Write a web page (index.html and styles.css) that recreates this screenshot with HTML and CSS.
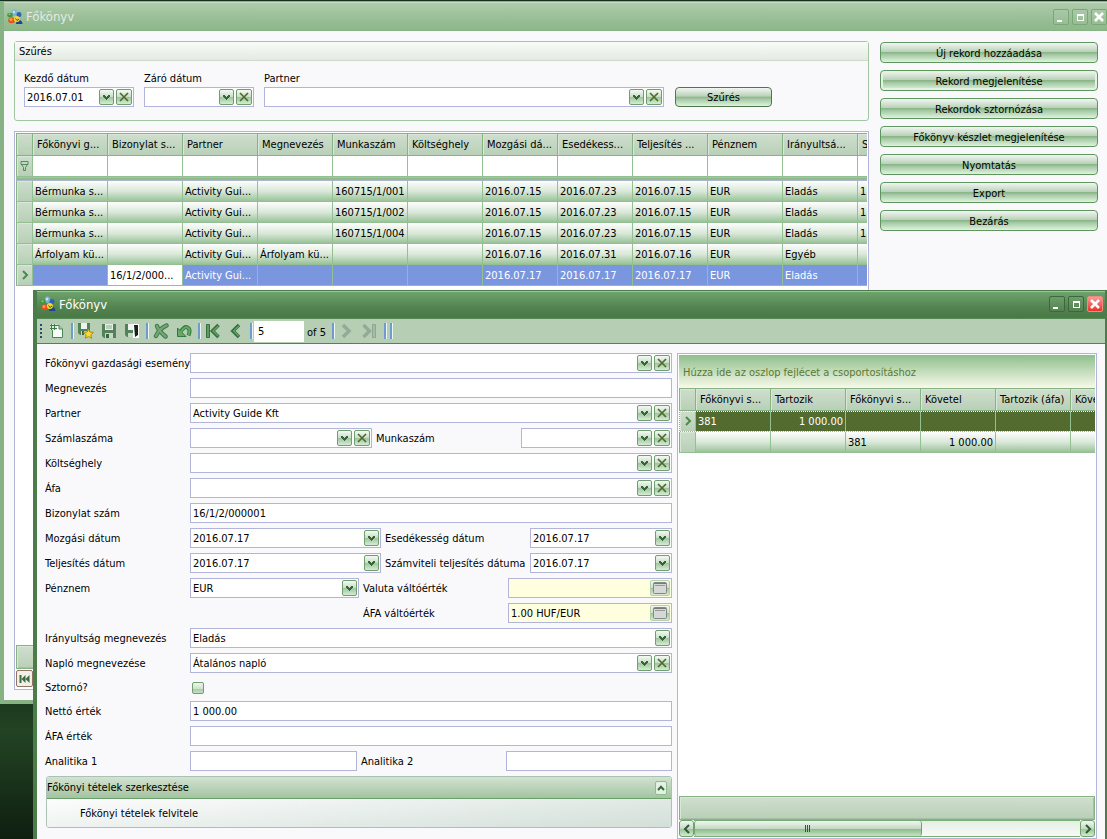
FILE: index.html
```
<!DOCTYPE html>
<html lang="hu">
<head>
<meta charset="utf-8">
<title>Főkönyv</title>
<link rel="stylesheet" href="styles.css">
</head>
<body>
<svg class="sprite" aria-hidden="true">
  <symbol id="logo" viewBox="0 0 16 16">
    <ellipse cx="7.500" cy="3.800" rx="2.600" ry="3.300" fill="#7db2d8"/><ellipse cx="7" cy="3" rx="1.200" ry="1.600" fill="#c4e2f2"/>
    <ellipse cx="12" cy="5.500" rx="2.400" ry="2.600" fill="#2c62b8"/>
    <ellipse cx="3" cy="6" rx="2.800" ry="2.300" fill="#3d9a3c"/><circle cx="2.500" cy="5.300" r="1" fill="#82cf6c"/>
    <path d="M9 15q0-4 3-4t3.500 4z" fill="#1c4598"/>
    <ellipse cx="4.600" cy="11.300" rx="3.400" ry="3" fill="#e8501c"/><circle cx="4" cy="10.500" r="1.500" fill="#ff9a50"/>
    <circle cx="9.800" cy="10" r="3" fill="#f5d535"/>
    <path d="M8.500 9.500l1.500 2 2-1.500" stroke="#5c4a18" fill="none"/>
  </symbol>
  <symbol id="down" viewBox="0 0 15 16"><path d="M4 6h2v1h1v1h1V7h1V6h2v2h-1v1H9v1H8v1H7v-1H6V9H5V8H4z" fill="#38643a"/></symbol>
  <symbol id="cross" viewBox="0 0 16 16"><path d="M4 4l8 8M12 4l-8 8" stroke="#4f6b2c" stroke-width="1.7" fill="none"/></symbol>
  <symbol id="up" viewBox="0 0 12 14"><path d="M3 9l3-3.200L9 9" stroke="#356b38" stroke-width="2" fill="none"/></symbol>
  <symbol id="caret" viewBox="0 0 10 10"><path d="M3 1l4 4-4 4" stroke="#4c8a50" stroke-width="2" fill="none"/></symbol>
  <symbol id="min" viewBox="0 0 16 16"><path d="M4 11h5v2H4z" fill="#fff"/></symbol>
  <symbol id="max" viewBox="0 0 16 16"><path d="M5 5h7v7H5zM6 7v4h5V7z" fill="#fff" fill-rule="evenodd"/></symbol>
  <symbol id="close" viewBox="0 0 16 16"><path d="M4 4l8 8M12 4l-8 8" stroke="#fff" stroke-width="2.600"/></symbol>
  <symbol id="card" viewBox="0 0 20 16"><rect x="3.500" y="2.500" width="13" height="11" rx="1" fill="#d6d8d6" stroke="#858985"/><path d="M4 3.500h12" stroke="#777c77"/><path d="M5 5.500h10" stroke="#999"/></symbol>
  <symbol id="new" viewBox="0 0 16 16"><path d="M4 3h7l3 3v9H4z" fill="#f8fcf8"/><path d="M3.500 7v7.500h10V6l-3.500-3.500H8" fill="none" stroke="#4d8552"/><path d="M10 2.500V6h3.500" fill="#a9c8a9" stroke="#4d8552"/><path d="M1 1h7v6H1z" fill="#dcebdc"/><path d="M1 2.500h7M1 5.500h7M2.500 1v6M5.500 1v6" stroke="#3d7a43"/></symbol>
  <symbol id="disk" viewBox="0 0 16 16"><path d="M1 1h14v14H3l-2-2z" fill="#53825a"/><path d="M4 1h8v6H4z" fill="#e7efe7"/><path d="M5 3h6M5 5h6" stroke="#8ba98d"/><path d="M4 10h8v5H4z" fill="#c8d6c8"/><path d="M5 11h3v4H5z" fill="#3c6541"/></symbol>
  <symbol id="disk-star" viewBox="0 0 18 18"><path d="M1 1h12v12H3l-2-2z" fill="#53825a"/><path d="M4 1h6v6H4z" fill="#eef3ee"/><path d="M4 9h6v4H4z" fill="#c8d6c8"/><path d="M5 9h2v4H5z" fill="#3c6541"/><path d="M11.500 7l1.400 3 3.600.4-2.600 2.400.7 3.500-3.100-1.800-3.100 1.800.7-3.500-2.600-2.400 3.600-.4z" fill="#f9dc2c" stroke="#b18a13"/></symbol>
  <symbol id="disk-exit" viewBox="0 0 16 16"><path d="M1 1h12v13H3l-2-2z" fill="#53825a"/><path d="M4 1h6v6H4z" fill="#eef3ee"/><path d="M4 10h6v4H4z" fill="#c8d6c8"/><path d="M9 1h6v14H9z" fill="#fff"/><path d="M10 2h4v10l-3 2z" fill="#17231a"/></symbol>
  <symbol id="delete" viewBox="0 0 16 16"><path d="M4 3q1 4 8.500 10.500M13.500 2.500Q6 6 3 13" stroke="#3f7a49" stroke-width="4.400" stroke-linecap="round" fill="none"/><path d="M4 3q1 4 8.500 10.500M13.500 2.500Q6 6 3 13" stroke="#74a67a" stroke-width="2.400" stroke-linecap="round" fill="none"/></symbol>
  <symbol id="undo" viewBox="0 0 16 16"><path d="M3.500 10.500Q8 2.500 11.500 4.500t1 8" stroke="#2f7b3e" stroke-width="4" fill="none"/><path d="M1.500 5v8.500H10z" fill="#69a868" stroke="#2f7b3e"/><path d="M4 10.500Q8 2.800 11.500 4.500t1 7.500" stroke="#69a868" stroke-width="2" fill="none"/></symbol>
  <symbol id="first" viewBox="0 0 16 16"><path d="M1.500 1.500h3v13h-3z" fill="#5d9a66" stroke="#35703e"/><path d="M13.500 2L7.500 8l6 6" stroke="#35703e" stroke-width="3.600" fill="none"/><path d="M13.200 3L8 8l5.200 5" stroke="#68a46f" stroke-width="1.200" fill="none"/></symbol>
  <symbol id="prev" viewBox="0 0 16 16"><path d="M11 2L5 8l6 6" stroke="#35703e" stroke-width="3.600" fill="none"/><path d="M10.800 3L5.600 8l5.200 5" stroke="#68a46f" stroke-width="1.200" fill="none"/></symbol>
  <symbol id="next" viewBox="0 0 16 16"><path d="M5 2l6 6-6 6" stroke="#94a996" stroke-width="3.400" fill="none"/></symbol>
  <symbol id="last" viewBox="0 0 16 16"><path d="M2.500 2l6 6-6 6" stroke="#94a996" stroke-width="3.400" fill="none"/><path d="M11.500 1.500h3v13h-3z" fill="#a9baa9" stroke="#90a592"/></symbol>
</svg>

<div class="desktop">
  <section class="window main-window">
    <header class="titlebar">
      <svg class="i16"><use href="#logo"/></svg>
      <h1>Főkönyv</h1>
      <div class="winbtns">
        <button class="winbtn" aria-label="Kis méret"><svg><use href="#min"/></svg></button>
        <button class="winbtn" aria-label="Teljes méret"><svg><use href="#max"/></svg></button>
        <button class="winbtn" aria-label="Ablak bezárása"><svg><use href="#close"/></svg></button>
      </div>
    </header>
    <div class="main-body">
      <div class="main-left">
        <form class="filter">
          <h2>Szűrés</h2>
          <div class="filter-fields">
            <label for="kezdo">Kezdő dátum</label>
            <label for="zaro">Záró dátum</label>
            <label for="fpartner">Partner</label>
            <span></span>
            <div class="field"><input id="kezdo" value="2016.07.01"><button type="button" class="mini drop" aria-label="Lenyitás"><svg><use href="#down"/></svg></button><button type="button" class="mini clear" aria-label="Törlés"><svg><use href="#cross"/></svg></button></div>
            <div class="field"><input id="zaro"><button type="button" class="mini drop" aria-label="Lenyitás"><svg><use href="#down"/></svg></button><button type="button" class="mini clear" aria-label="Törlés"><svg><use href="#cross"/></svg></button></div>
            <div class="field"><select id="fpartner"><option></option></select><span class="mini drop"><svg><use href="#down"/></svg></span><button type="button" class="mini clear" aria-label="Törlés"><svg><use href="#cross"/></svg></button></div>
            <button type="button" class="push">Szűrés</button>
          </div>
        </form>
        <div class="gridbox main-grid">
          <div class="scroller">
          <table class="grid ledger">
            <colgroup><col class="c-ind"><col span="12"></colgroup>
            <thead>
              <tr><th></th><th>Főkönyvi g...</th><th>Bizonylat s...</th><th>Partner</th><th>Megnevezés</th><th>Munkaszám</th><th>Költséghely</th><th>Mozgási dá...</th><th>Esedékess...</th><th>Teljesítés ...</th><th>Pénznem</th><th>Irányultsá...</th><th>S</th></tr>
              <tr class="filter-row"><td class="ind"><svg class="funnel" viewBox="0 0 9 10"><path d="M1 .5h7v3H1zM1.500 3.500l2 3v3h2v-3l2-3" fill="none" stroke="#4f8d55"/></svg></td><td></td><td></td><td></td><td></td><td></td><td></td><td></td><td></td><td></td><td></td><td></td><td></td></tr>
              <tr class="split"><td colspan="13"></td></tr>
            </thead>
            <tbody>
              <tr><td class="ind"></td><td>Bérmunka s...</td><td></td><td>Activity Gui...</td><td></td><td>160715/1/001</td><td></td><td>2016.07.15</td><td>2016.07.23</td><td>2016.07.15</td><td>EUR</td><td>Eladás</td><td>1</td></tr>
              <tr><td class="ind"></td><td>Bérmunka s...</td><td></td><td>Activity Gui...</td><td></td><td>160715/1/002</td><td></td><td>2016.07.15</td><td>2016.07.23</td><td>2016.07.15</td><td>EUR</td><td>Eladás</td><td>1</td></tr>
              <tr><td class="ind"></td><td>Bérmunka s...</td><td></td><td>Activity Gui...</td><td></td><td>160715/1/004</td><td></td><td>2016.07.15</td><td>2016.07.23</td><td>2016.07.15</td><td>EUR</td><td>Eladás</td><td>1</td></tr>
              <tr><td class="ind"></td><td>Árfolyam kü...</td><td></td><td>Activity Gui...</td><td>Árfolyam kü...</td><td></td><td></td><td>2016.07.16</td><td>2016.07.31</td><td>2016.07.16</td><td>EUR</td><td>Egyéb</td><td></td></tr>
              <tr class="selected"><td class="ind"><svg class="caret"><use href="#caret"/></svg></td><td></td><td class="focus">16/1/2/000...</td><td>Activity Gui...</td><td></td><td></td><td></td><td>2016.07.17</td><td>2016.07.17</td><td>2016.07.17</td><td>EUR</td><td>Eladás</td><td></td></tr>
            </tbody>
          </table>
          </div>
          <div class="summary"></div>
          <div class="navigator"><button class="navbtn" aria-label="Első rekord"><svg viewBox="0 0 10 10"><path d="M0 1h2v8H0zM6 1v8L2 5zM10 1v8L6 5z" fill="#3f6b40"/></svg></button></div>
        </div>
      </div>
      <nav class="actions">
        <button class="push">Új rekord hozzáadása</button>
        <button class="push active">Rekord megjelenítése</button>
        <button class="push">Rekordok sztornózása</button>
        <button class="push">Főkönyv készlet megjelenítése</button>
        <button class="push">Nyomtatás</button>
        <button class="push">Export</button>
        <button class="push">Bezárás</button>
      </nav>
    </div>
  </section>

  <section class="window detail-window">
    <header class="titlebar">
      <svg class="i16"><use href="#logo"/></svg>
      <h1>Főkönyv</h1>
      <div class="winbtns">
        <button class="winbtn" aria-label="Kis méret"><svg><use href="#min"/></svg></button>
        <button class="winbtn" aria-label="Teljes méret"><svg><use href="#max"/></svg></button>
        <button class="winbtn red" aria-label="Ablak bezárása"><svg><use href="#close"/></svg></button>
      </div>
    </header>
    <div class="toolbar">
      <span class="grip"></span>
      <button aria-label="Új"><svg><use href="#new"/></svg></button>
      <i></i>
      <button aria-label="Mentés és új"><svg class="big"><use href="#disk-star"/></svg></button>
      <button aria-label="Mentés"><svg><use href="#disk"/></svg></button>
      <button aria-label="Mentés és bezárás"><svg><use href="#disk-exit"/></svg></button>
      <i></i>
      <button aria-label="Törlés"><svg><use href="#delete"/></svg></button>
      <button aria-label="Visszavonás"><svg><use href="#undo"/></svg></button>
      <i></i>
      <button aria-label="Első"><svg><use href="#first"/></svg></button>
      <button aria-label="Előző"><svg><use href="#prev"/></svg></button>
      <i></i>
      <input id="pos" value="5" aria-label="Pozíció">
      <label for="pos">of 5</label>
      <i></i>
      <button aria-label="Következő" disabled><svg><use href="#next"/></svg></button>
      <button aria-label="Utolsó" disabled><svg><use href="#last"/></svg></button>
      <i></i><i></i>
    </div>
    <div class="detail-body">
      <form class="detail-form">
        <div class="row"><label for="f1">Főkönyvi gazdasági esemény</label><div class="field"><select id="f1"><option></option></select><span class="mini drop"><svg><use href="#down"/></svg></span><button type="button" class="mini clear" aria-label="Törlés"><svg><use href="#cross"/></svg></button></div></div>
        <div class="row"><label for="f2">Megnevezés</label><div class="field"><input id="f2"></div></div>
        <div class="row"><label for="f3">Partner</label><div class="field"><select id="f3"><option>Activity Guide Kft</option></select><span class="mini drop"><svg><use href="#down"/></svg></span><button type="button" class="mini clear" aria-label="Törlés"><svg><use href="#cross"/></svg></button></div></div>
        <div class="row r-invoice"><label for="f4">Számlaszáma</label><div class="field"><select id="f4"><option></option></select><span class="mini drop"><svg><use href="#down"/></svg></span><button type="button" class="mini clear" aria-label="Törlés"><svg><use href="#cross"/></svg></button></div>
          <label for="f5">Munkaszám</label><div class="field"><select id="f5"><option></option></select><span class="mini drop"><svg><use href="#down"/></svg></span><button type="button" class="mini clear" aria-label="Törlés"><svg><use href="#cross"/></svg></button></div></div>
        <div class="row"><label for="f6">Költséghely</label><div class="field"><select id="f6"><option></option></select><span class="mini drop"><svg><use href="#down"/></svg></span><button type="button" class="mini clear" aria-label="Törlés"><svg><use href="#cross"/></svg></button></div></div>
        <div class="row"><label for="f7">Áfa</label><div class="field"><select id="f7"><option></option></select><span class="mini drop"><svg><use href="#down"/></svg></span><button type="button" class="mini clear" aria-label="Törlés"><svg><use href="#cross"/></svg></button></div></div>
        <div class="row"><label for="f8">Bizonylat szám</label><div class="field"><input id="f8" value="16/1/2/000001"></div></div>
        <div class="row r-date"><label for="f9">Mozgási dátum</label><div class="field"><input id="f9" value="2016.07.17"><button type="button" class="mini drop" aria-label="Lenyitás"><svg><use href="#down"/></svg></button></div>
          <label for="f10">Esedékesség dátum</label><div class="field"><input id="f10" value="2016.07.17"><button type="button" class="mini drop" aria-label="Lenyitás"><svg><use href="#down"/></svg></button></div></div>
        <div class="row r-date"><label for="f11">Teljesítés dátum</label><div class="field"><input id="f11" value="2016.07.17"><button type="button" class="mini drop" aria-label="Lenyitás"><svg><use href="#down"/></svg></button></div>
          <label for="f12">Számviteli teljesítés dátuma</label><div class="field"><input id="f12" value="2016.07.17"><button type="button" class="mini drop" aria-label="Lenyitás"><svg><use href="#down"/></svg></button></div></div>
        <div class="row r-currency"><label for="f13">Pénznem</label><div class="field"><select id="f13"><option>EUR</option></select><span class="mini drop"><svg><use href="#down"/></svg></span></div>
          <label for="f14">Valuta váltóérték</label><div class="field yellow"><input id="f14"><button type="button" class="mini card" aria-label="Megnyitás"><svg><use href="#card"/></svg></button></div></div>
        <div class="row r-currency"><span></span><span></span><label for="f15">ÁFA váltóérték</label><div class="field yellow"><input id="f15" value="1.00 HUF/EUR"><button type="button" class="mini card" aria-label="Megnyitás"><svg><use href="#card"/></svg></button></div></div>
        <div class="row"><label for="f16">Irányultság megnevezés</label><div class="field"><select id="f16"><option>Eladás</option></select><span class="mini drop"><svg><use href="#down"/></svg></span></div></div>
        <div class="row"><label for="f17">Napló megnevezése</label><div class="field"><select id="f17"><option>Átalános napló</option></select><span class="mini drop"><svg><use href="#down"/></svg></span><button type="button" class="mini clear" aria-label="Törlés"><svg><use href="#cross"/></svg></button></div></div>
        <div class="row r-check"><label for="f18">Sztornó?</label><input type="checkbox" id="f18"></div>
        <div class="row"><label for="f19">Nettó érték</label><div class="field"><input id="f19" value="1 000.00"></div></div>
        <div class="row"><label for="f20">ÁFA érték</label><div class="field"><input id="f20"></div></div>
        <div class="row r-analytic"><label for="f21">Analitika 1</label><div class="field"><input id="f21"></div><label for="f22">Analitika 2</label><div class="field"><input id="f22"></div></div>
        <div class="navgroup">
          <div class="navgroup-head"><h2>Főkönyi tételek szerkesztése</h2><button type="button" aria-label="Összecsukás"><svg><use href="#up"/></svg></button></div>
          <a href="#">Főkönyi tételek felvitele</a>
        </div>
      </form>
      <div class="gridbox items">
        <div class="grouppanel">Húzza ide az oszlop fejlécet a csoportosításhoz</div>
        <div class="scroller">
        <table class="grid">
          <colgroup><col class="c-ind"><col span="6"></colgroup>
          <thead><tr><th></th><th>Főkönyvi s...</th><th>Tartozik</th><th>Főkönyvi s...</th><th>Követel</th><th>Tartozik (áfa)</th><th>Köve</th></tr></thead>
          <tbody>
            <tr class="olive"><td class="ind"><svg class="caret"><use href="#caret"/></svg></td><td>381</td><td class="num">1 000.00</td><td></td><td></td><td></td><td></td></tr>
            <tr><td class="ind"></td><td></td><td></td><td>381</td><td class="num">1 000.00</td><td></td><td></td></tr>
          </tbody>
        </table>
        </div>
        <div class="summary"></div>
        <div class="hscroll">
          <button aria-label="Balra"><svg viewBox="0 0 10 10"><path d="M7 1L3 5l4 4" stroke="#2f5a33" stroke-width="2" fill="none"/></svg></button>
          <div class="track"><div class="thumb"><span></span></div></div>
          <button aria-label="Jobbra"><svg viewBox="0 0 10 10"><path d="M3 1l4 4-4 4" stroke="#2f5a33" stroke-width="2" fill="none"/></svg></button>
        </div>
      </div>
    </div>
  </section>
</div>
</body>
</html>
```

FILE: styles.css
```
* { box-sizing: border-box; }
body, h1, h2 { margin: 0; }
body, button, input, select {
  font-family: "DejaVu Sans Condensed", "Noto Sans", sans-serif;
  font-size: 11px;
  color: #000;
}
button { padding: 0; }
svg { display: block; }
.sprite { position: absolute; width: 0; height: 0; }

.desktop {
  position: relative;
  height: 100vh;
  overflow: hidden;
  background: linear-gradient(#14301a, #1c3a1e 84%, #234324 87%, #0f1f10);
}
.window { position: absolute; display: flex; flex-direction: column; background: #f9f9fc; }
.main-window {
  top: 1px; left: 0; right: 0; bottom: 135px;
  border: solid #86b284;
  border-width: 1px 0 4px 4px;
}
.detail-window {
  top: 290px; left: 33px; right: 0; bottom: 0;
  border: solid #4b7c49;
  border-width: 1px 2px 0 4px;
}

.titlebar {
  display: flex;
  align-items: center;
  flex: none;
  height: 29px;
  gap: 3px;
  padding-left: 3px;
  border-top: 1px solid #c5dbc3;
  border-bottom: 1px solid #86b284;
  background: linear-gradient(#adcbab, #93bb90 75%, #8fb88c);
}
.titlebar .i16 { width: 16px; height: 16px; }
.titlebar h1 { flex: 1; font-size: 13px; font-weight: normal; color: #e3ebe3; }
.detail-window .titlebar {
  height: 28px;
  padding: 0 2px 2px 3px;
  border-top-color: #9cc399;
  border-bottom-color: #568a53;
  background: linear-gradient(#6ea36b, #528350 60%, #4a7848);
}
.detail-window .titlebar h1 { color: #fff; }
.winbtns { display: flex; gap: 3px; }
.winbtn {
  width: 16px; height: 16px;
  border: 1px solid #78a876;
  border-radius: 2px;
  background: linear-gradient(#a9c9a7, #98bd95);
}
.winbtn svg { width: 16px; height: 16px; margin: -1px; }
.detail-window .winbtn { border-color: #3d683b; background: linear-gradient(#6d9e6a, #548351); }
.detail-window .winbtn.red { border-color: #ec8a84; background: linear-gradient(#f79a94, #e8322b); }

.main-body {
  flex: 1;
  min-height: 0;
  display: grid;
  grid-template-columns: minmax(0, 1fr) 218px;
  gap: 11px;
  padding: 10px 9px 10px 10px;
}
.main-left { display: flex; flex-direction: column; gap: 10px; min-height: 0; }
.filter { border: 1px solid #a3c6a2; border-radius: 3px; height: 80px; flex: none; }
.filter h2 {
  height: 19px;
  padding-left: 4px;
  border-bottom: 1px solid #ccdccb;
  line-height: 19px;
  font-size: 11px;
  font-weight: normal;
  background: linear-gradient(#f9fbf8, #e4eae2);
}
.filter-fields {
  display: grid;
  grid-template-columns: 110px 110px 400px 98px;
  gap: 0 10px;
  padding: 9px;
}
.filter-fields label { line-height: 18px; height: 17px; }

.field {
  display: flex;
  align-items: center;
  gap: 2px;
  height: 20px;
  min-width: 0;
  padding-right: 1px;
  border: 1px solid #b2b5d9;
  background: #fff;
}
.field input, .field select {
  flex: 1;
  min-width: 0;
  width: 0;
  height: 18px;
  padding: 0 0 0 2px;
  border: 0;
  outline: 0;
  background: transparent;
  appearance: none;
}
.yellow { background: #ffffdf; }
.mini {
  flex: none;
  width: 15px; height: 16px;
  border: 1px solid #6f9f6d;
  border-radius: 2px;
  background: linear-gradient(#f4f9f4, #c9dfc8 48%, #9fc49d 52%, #d5ecd4);
}
.mini svg { width: 15px; height: 16px; margin: -1px; }
.mini.clear { width: 16px; }
.mini.clear svg { width: 16px; }
.mini.card { width: 20px; border-color: #b3d0a8; }
.mini.card svg { width: 20px; }
.push {
  height: 21px;
  padding-top: 1px;
  border: 1px solid #5f965f;
  border-radius: 4px;
  background: linear-gradient(#f1f7f1, #b9d1b8 46%, #8cb68a 50%, #a9cda8 65%, #e0f2df);
}
.push.active { box-shadow: inset 0 0 0 2px #e4f1e3; }
.filter .push { height: 20px; margin-left: 1px; border-color: #4c784b; }
.actions { display: flex; flex-direction: column; gap: 7px; padding-top: 1px; }

.gridbox { display: flex; flex-direction: column; border: 1px solid #b2b5d9; padding: 1px; background: #fff; min-width: 0; min-height: 0; }
.main-grid { flex: 1; }
.scroller { flex: 1; overflow: hidden; min-height: 0; }
.grid { table-layout: fixed; width: 467px; border-spacing: 0; }
.ledger { width: 917px; }
.c-ind { width: 17px; }
.grid th, .grid td {
  height: 21px;
  padding: 1px 0 0 2px;
  border: solid #93bf92;
  border-width: 0 1px 1px 0;
  line-height: 16px;
  white-space: nowrap;
  overflow: hidden;
  text-align: left;
  font-weight: normal;
}
.grid th {
  height: 23px;
  padding-left: 4px;
  border-top: 1px solid #86b284;
  border-color: #86b284;
  background: linear-gradient(#cfdfce, #b9cfb7);
  box-shadow: inset 1px 1px #d8e7d7;
}
.grid th:first-child, .grid td.ind {
  padding: 0;
  border-left: 1px solid #86b284;
  background: linear-gradient(#cddecc, #b8cfb6);
  box-shadow: inset 1px 1px #d8e7d7;
}
.grid tbody tr { background: linear-gradient(#fdfefd, #d8e7d7 50%, #93bf92); }
.grid .split td {
  height: 4px;
  padding: 0;
  border: solid #aeb6cf;
  border-width: 1px 0;
  background: #8fbb8d;
}
.grid tbody .selected { background: #7a96df; }
.grid tbody .selected td { color: #fff; }
.grid .selected td.focus { background: #fff; color: #000; }
.grid tbody .olive { background: #546b2f; outline: 1px dotted #fff; outline-offset: -1px; }
.grid tbody .olive td { color: #fff; }
.grid .num { text-align: right; padding-right: 2px; }
.caret { width: 10px; height: 10px; margin: 0 auto; }
.funnel { width: 9px; height: 10px; margin: 0 auto; }
.summary {
  flex: none;
  height: 24px;
  border: 1px solid #86b284;
  background: linear-gradient(#cfdfce, #b9cfb7);
  box-shadow: inset 1px 1px #d8e7d7, inset -1px -1px #a9bea8;
}
.navigator { padding: 1px 0; flex: none; }
.navbtn {
  display: flex; align-items: center; justify-content: center;
  width: 17px; height: 17px;
  border: 1px solid #8f7468;
  border-radius: 2px;
  background: #f3efe8;
}
.navbtn svg { width: 11px; height: 10px; }

.toolbar {
  display: flex;
  align-items: center;
  flex: none;
  height: 25px;
  padding-left: 3px;
  border-bottom: 1px solid #4a76a6;
  background: #b6ceb3;
}
.toolbar button { width: 23px; height: 22px; border: 0; background: none; }
.toolbar svg { width: 16px; height: 16px; margin: 0 auto; }
.toolbar svg.big { width: 18px; height: 18px; }
.toolbar i { width: 6px; height: 16px; padding-left: 3px; }
.toolbar i::before { content: ""; display: block; width: 2px; height: 16px; background: #6f9bd0; border-right: 1px solid #eef5ee; }
.toolbar input { width: 50px; height: 21px; margin-left: 1px; padding: 0 0 0 4px; border: 0; background: #fff; }
.toolbar label { padding: 2px 3px 0; }
.grip { width: 5px; height: 15px; background: repeating-linear-gradient(#24487a 0 2px, transparent 2px 4px) 0 0 / 2px 15px no-repeat; }

.detail-body {
  flex: 1;
  min-height: 0;
  display: grid;
  grid-template-columns: minmax(0, 627fr) minmax(0, 420fr);
  gap: 5px;
  padding: 9px 8px 0;
}
.detail-form { display: flex; flex-direction: column; gap: 5px; }
.row { display: grid; grid-template-columns: 145px minmax(0, 1fr); flex: none; height: 20px; }
.row label { line-height: 22px; white-space: nowrap; }
.row label:nth-of-type(2), .row span + label { padding-left: 4px; }
.r-invoice { grid-template-columns: 145px minmax(0, 182fr) 149px minmax(0, 151fr); }
.r-date { grid-template-columns: 145px minmax(0, 191fr) 149px minmax(0, 142fr); }
.r-currency { grid-template-columns: 145px minmax(0, 169fr) 149px minmax(0, 164fr); }
.r-analytic { grid-template-columns: 145px minmax(0, 167fr) 149px minmax(0, 166fr); }
.row.r-check { height: 18px; align-items: center; }
.r-check label { line-height: 20px; }
.r-check input {
  width: 12px; height: 12px;
  margin: 0 2px;
  appearance: none;
  border: 1px solid #6f9f6d;
  border-radius: 2px;
  background: linear-gradient(#eef5ee, #cfe2ce 55%, #a9cba7 60%, #c6e0c5);
}

.navgroup { border: 1px solid #a9c2b4; border-radius: 3px; height: 52px; margin-left: 1px; overflow: hidden; }
.navgroup-head {
  display: flex;
  align-items: center;
  height: 22px;
  padding-right: 4px;
  border-bottom: 1px solid #6c9e6a;
  background: linear-gradient(#d3e3d2, #a3c3a1);
}
.navgroup-head h2 { flex: 1; font-size: 11px; font-weight: normal; line-height: 22px; }
.navgroup-head button { width: 12px; height: 14px; border: 1px solid #8fbb8d; border-radius: 2px; background: #e3f1e2; }
.navgroup-head svg { width: 12px; height: 14px; margin: -1px; }
.navgroup a {
  display: block;
  height: 28px;
  padding-left: 33px;
  line-height: 29px;
  color: #000;
  text-decoration: none;
  background: linear-gradient(175deg, #fcfdfd, #d3dfd9);
}

.grouppanel {
  flex: none;
  height: 33px;
  padding-left: 4px;
  line-height: 35px;
  color: #5b7a33;
  background: linear-gradient(#8fbf8d, #f8fae9);
}
.hscroll { display: flex; flex: none; height: 17px; }
.hscroll button {
  display: flex; align-items: center; justify-content: center;
  width: 15px; height: 17px;
  border: 1px solid #6ea36b;
  border-radius: 3px;
  background: linear-gradient(#f1f7f1, #c5dac4 50%, #9cc39a 55%, #d3ead2);
}
.hscroll button svg { width: 10px; height: 10px; flex: none; }
.track { flex: 1; height: 17px; border: solid #79ad76; border-width: 1px 0; background: linear-gradient(#e4efe3, #f7faf6); }
.thumb {
  display: flex; align-items: center; justify-content: center;
  width: 59%; height: 15px;
  border: solid #6ea36b;
  border-width: 0 1px;
  border-radius: 3px;
  background: linear-gradient(#f1f7f1, #c5dac4 50%, #8fbb8d 55%, #c6e2c5);
}
.thumb span { width: 5px; height: 7px; background: repeating-linear-gradient(90deg, #2f5a33 0 1px, transparent 1px 2px); }
```
